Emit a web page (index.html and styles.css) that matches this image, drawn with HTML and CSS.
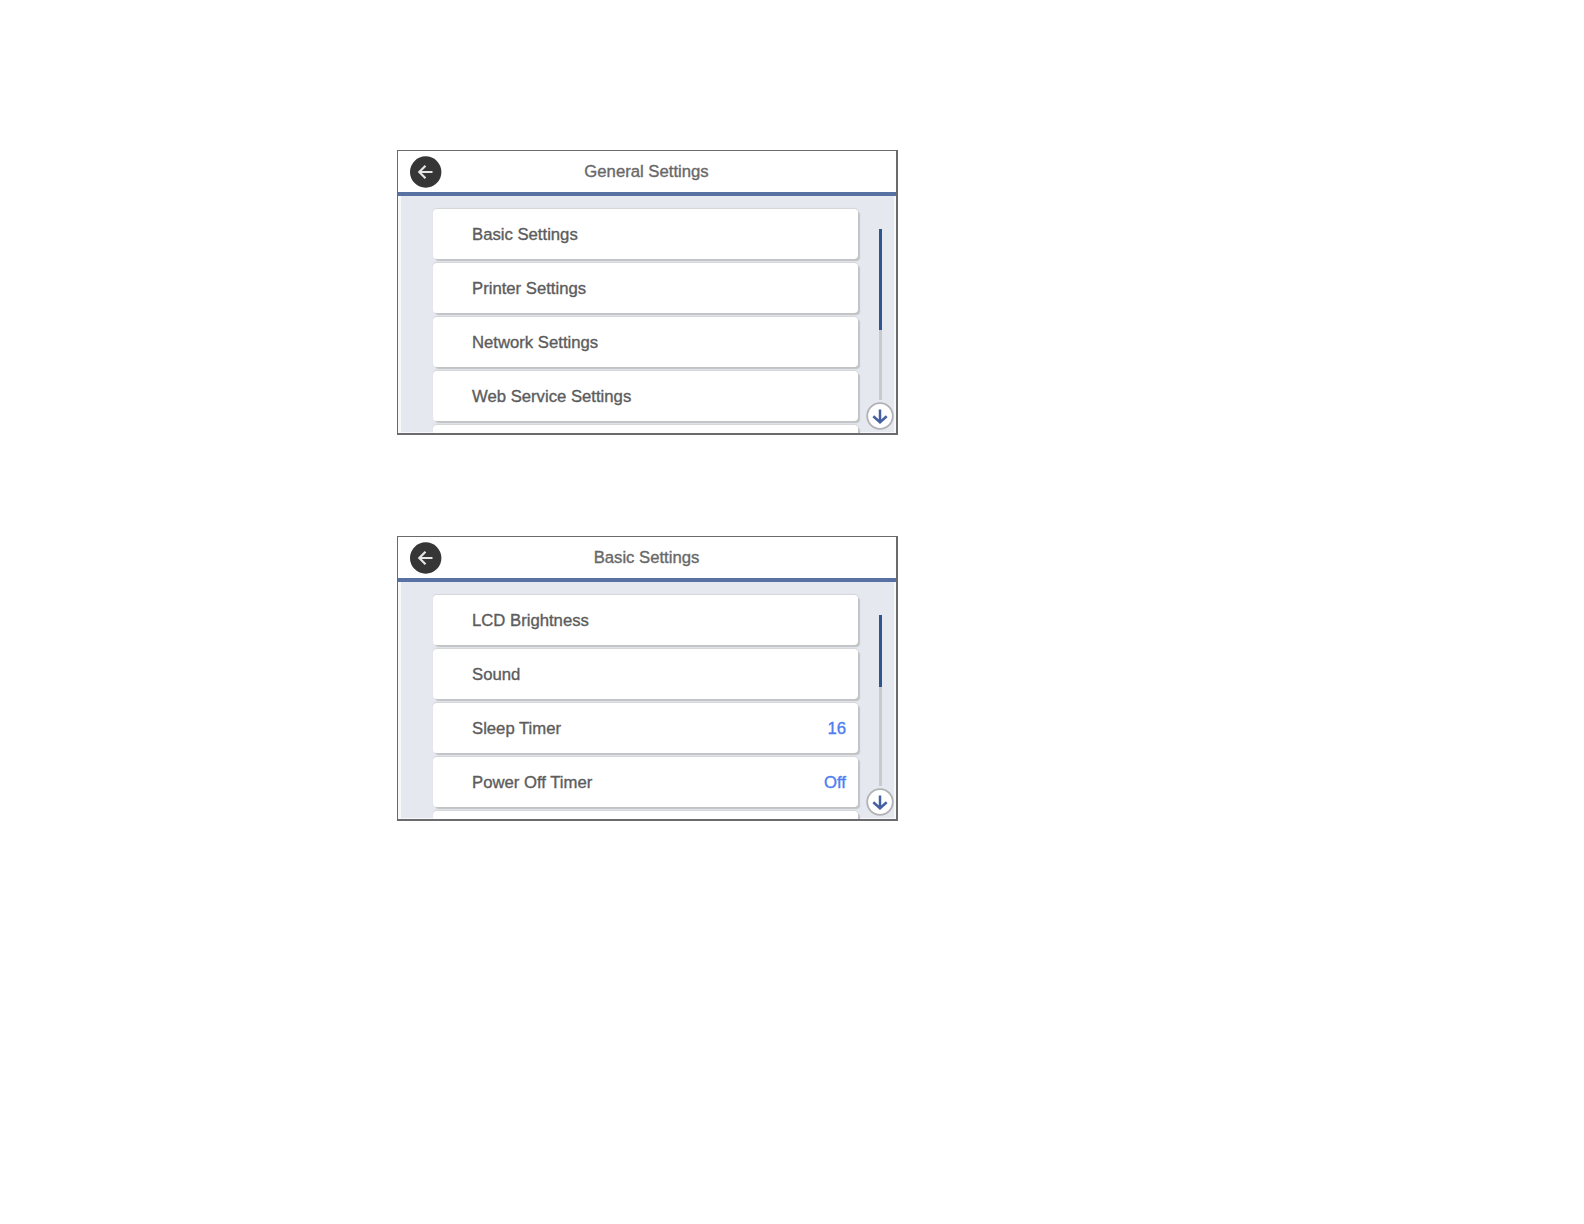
FILE: index.html
```
<!DOCTYPE html>
<html lang="en">
<head>
    <meta charset="UTF-8">
    <meta name="viewport" content="width=device-width, initial-scale=1.0">
    <title>General Settings</title>
    <link rel="stylesheet" href="styles.css">
</head>

<body>
    <div class="screen">
        <div class="header">
            <svg class="back" viewBox="0 0 32 32">
                <circle cx="15.7" cy="16" r="15.7" fill="#363636"/>
                <path d="M22.5 16H10M15.5 9.8L9.3 16L15.5 22.2" fill="none" stroke="#e6e6e6" stroke-width="2.2"/>
            </svg>
            <h1>General Settings</h1>
        </div>
        <div class="content">
            <div class="list">
                <div class="item"><span>Basic Settings</span></div>
                <div class="item"><span>Printer Settings</span></div>
                <div class="item"><span>Network Settings</span></div>
                <div class="item"><span>Web Service Settings</span></div>
                <div class="item"></div>
            </div>
            <div class="scroll">
                <div class="track"><div class="thumb"></div></div>
                <svg class="down" viewBox="0 0 28 28">
                    <circle cx="14" cy="14" r="12.8" fill="#fff" stroke="#b0b2b5" stroke-width="1.8"/>
                    <path d="M14 7.5V20M7.3 14.3L14 20.3L20.7 14.3" fill="none" stroke="#4560a2" stroke-width="2.5"/>
                </svg>
            </div>
        </div>
    </div>

    <div class="screen">
        <div class="header">
            <svg class="back" viewBox="0 0 32 32">
                <circle cx="15.7" cy="16" r="15.7" fill="#363636"/>
                <path d="M22.5 16H10M15.5 9.8L9.3 16L15.5 22.2" fill="none" stroke="#e6e6e6" stroke-width="2.2"/>
            </svg>
            <h1>Basic Settings</h1>
        </div>
        <div class="content">
            <div class="list">
                <div class="item"><span>LCD Brightness</span></div>
                <div class="item"><span>Sound</span></div>
                <div class="item"><span>Sleep Timer</span><span class="value">16</span></div>
                <div class="item"><span>Power Off Timer</span><span class="value">Off</span></div>
                <div class="item"></div>
            </div>
            <div class="scroll">
                <div class="track"><div class="thumb short"></div></div>
                <svg class="down" viewBox="0 0 28 28">
                    <circle cx="14" cy="14" r="12.8" fill="#fff" stroke="#b0b2b5" stroke-width="1.8"/>
                    <path d="M14 7.5V20M7.3 14.3L14 20.3L20.7 14.3" fill="none" stroke="#4560a2" stroke-width="2.5"/>
                </svg>
            </div>
        </div>
    </div>
</body>
</html>
```

FILE: styles.css
```
* {
    box-sizing: border-box;
}

body {
    font-family: "Liberation Sans", Arial, sans-serif;
    font-size: 16.7px;
    color: #5c5c5c;
    background-color: #fff;
    margin: 0;
    padding: 150px 0 0 397px;
}

.screen {
    display: flex;
    flex-direction: column;
    width: 501px;
    height: 285px;
    margin-bottom: 101px;
    border: solid #6b6b6d;
    border-width: 1px 2px 2px 1px;
    overflow: hidden;
}

.header {
    display: grid;
    grid-template-columns: 44px 1fr 57px;
    align-items: center;
    height: 45px;
    padding-left: 12px;
    border-bottom: 4px solid #5871a3;
}

.back {
    display: block;
    width: 32px;
    height: 32px;
}

h1 {
    margin: 0;
    padding-top: 1px;
    font-size: 16.7px;
    font-weight: normal;
    text-align: center;
    color: #686868;
    -webkit-text-stroke: 0.35px #686868;
}

.content {
    display: flex;
    flex: 1;
    min-height: 0;
    padding: 13px 0 0 32px;
    background-color: #e5e8ef;
    border: solid #f7f8fa;
    border-width: 0 2px 1px 3px;
}

.list {
    width: 425px;
}

.item {
    display: flex;
    justify-content: space-between;
    align-items: center;
    height: 50px;
    margin-bottom: 4px;
    padding: 1px 12px 0 39px;
    background-color: #fff;
    border-radius: 4px;
    box-shadow: 0 -1px 1px #d3d5d8, 2px 2px 1px #c1c3c5;
    -webkit-text-stroke: 0.35px;
}

.value {
    color: #4c7df2;
}

.scroll {
    display: flex;
    flex-direction: column;
    align-items: center;
    width: 28px;
    margin-left: 8px;
    padding-top: 20px;
}

.track {
    display: flex;
    justify-content: center;
    width: 3px;
    height: 171px;
    background-color: #c8cacf;
}

.thumb {
    flex: none;
    width: 3px;
    height: 101px;
    background-color: #2e5590;
}

.thumb.short {
    height: 72px;
}

.down {
    flex: none;
    width: 28px;
    height: 28px;
    margin-top: 2px;
}
```
